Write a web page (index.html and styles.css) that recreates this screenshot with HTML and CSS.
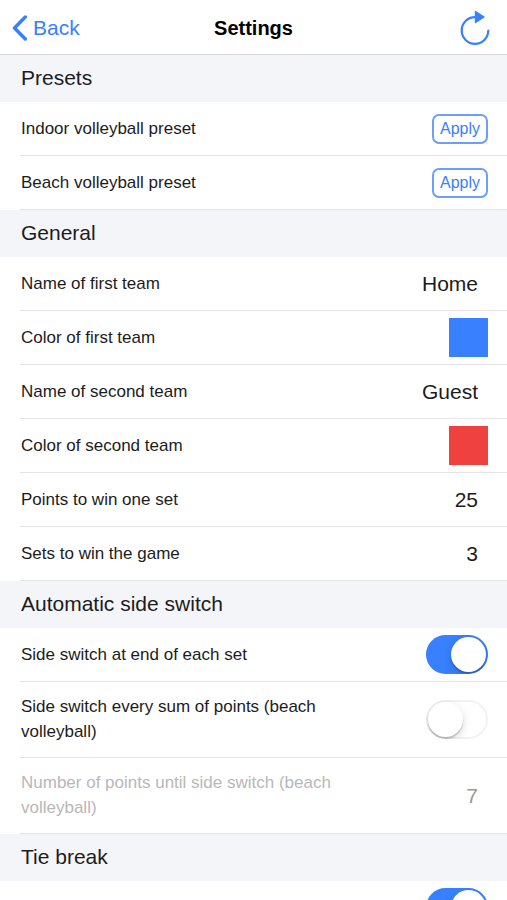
FILE: index.html
```html
<!DOCTYPE html>
<html lang="en">
<head>
<meta charset="utf-8">
<meta name="viewport" content="width=device-width, initial-scale=1">
<title>Settings</title>
<link rel="stylesheet" href="styles.css">
</head>
<body>
<header class="toolbar">
  <a class="back" href="#">
    <svg class="back-icon" viewBox="0 0 16 26" aria-hidden="true"><path d="M13.300 2 2.500 13l10.800 11"/></svg>
    <span>Back</span>
  </a>
  <h1 class="title">Settings</h1>
  <button class="reset" type="button" aria-label="Reset">
    <svg class="reset-icon" viewBox="0 0 32 36" aria-hidden="true">
      <path class="arc" d="M29.300 20.500A13.300 13.300 0 1 1 16 7.200h2"/>
      <path class="head" d="M16.500 1.500v11l8.500-5.500z"/>
    </svg>
  </button>
</header>
<main>
  <section>
    <h2 class="section-title">Presets</h2>
    <div class="row"><span class="label" id="indoor">Indoor volleyball preset</span><button class="apply" type="button" aria-describedby="indoor">Apply</button></div>
    <div class="row"><span class="label" id="beach">Beach volleyball preset</span><button class="apply" type="button" aria-describedby="beach">Apply</button></div>
  </section>
  <section>
    <h2 class="section-title">General</h2>
    <div class="row"><label class="label" for="name1">Name of first team</label><input class="value" id="name1" type="text" value="Home"></div>
    <div class="row"><label class="label" for="color1">Color of first team</label><input class="swatch" id="color1" type="color" value="#3880ff"></div>
    <div class="row"><label class="label" for="name2">Name of second team</label><input class="value" id="name2" type="text" value="Guest"></div>
    <div class="row"><label class="label" for="color2">Color of second team</label><input class="swatch" id="color2" type="color" value="#f04141"></div>
    <div class="row"><label class="label" for="points">Points to win one set</label><input class="value" id="points" type="text" inputmode="numeric" value="25"></div>
    <div class="row"><label class="label" for="sets">Sets to win the game</label><input class="value" id="sets" type="text" inputmode="numeric" value="3"></div>
  </section>
  <section>
    <h2 class="section-title">Automatic side switch</h2>
    <div class="row"><label class="label" for="switch-set">Side switch at end of each set</label><input class="toggle" id="switch-set" type="checkbox" role="switch" checked></div>
    <div class="row"><label class="label" for="switch-sum">Side switch every sum of points (beach volleyball)</label><input class="toggle" id="switch-sum" type="checkbox" role="switch"></div>
    <div class="row disabled"><label class="label" for="switch-points">Number of points until side switch (beach volleyball)</label><input class="value" id="switch-points" type="text" value="7" disabled></div>
  </section>
  <section>
    <h2 class="section-title" id="tie-title">Tie break</h2>
    <div class="row row-end"><input class="toggle" type="checkbox" role="switch" aria-labelledby="tie-title" checked></div>
  </section>
</main>
</body>
</html>
```
FILE: styles.css
```css
:root {
  --blue: #3880ff;
  --line: #e4e4e6;
}

* { box-sizing: border-box; }

html,
body { height: 100%; }

body {
  margin: 0;
  display: flex;
  flex-direction: column;
  overflow: hidden;
  background: #fff;
  color: #1c1c1c;
  font-family: "Liberation Sans", Arial, sans-serif;
}

input,
button { font-family: inherit; margin: 0; }

.toolbar {
  flex: none;
  display: grid;
  grid-template-columns: 1fr auto 1fr;
  align-items: center;
  height: 55px;
  padding: 2px 12px 0;
  border-bottom: 1px solid #d8d8da;
}

.back {
  display: flex;
  align-items: center;
  gap: 5px;
  color: var(--blue);
  font-size: 21px;
  text-decoration: none;
}

.back-icon {
  width: 16px;
  height: 26px;
  fill: none;
  stroke: var(--blue);
  stroke-width: 3.4;
  stroke-linecap: round;
  stroke-linejoin: round;
}

.title {
  margin: 0;
  color: #000;
  font-size: 20px;
  font-weight: 700;
}

.reset {
  justify-self: end;
  padding: 0 4px 0 0;
  border: 0;
  background: none;
}

.reset-icon {
  display: block;
  width: 32px;
  height: 36px;
}

.arc {
  fill: none;
  stroke: var(--blue);
  stroke-width: 2.2;
  stroke-linecap: round;
}

.head {
  fill: var(--blue);
  stroke: var(--blue);
  stroke-width: 1.4;
  stroke-linejoin: round;
}

main {
  flex: 1;
  min-height: 0;
  overflow: hidden;
}

.section-title {
  margin: 0;
  padding: 0 21px 1px;
  background: #f4f5f9;
  font-size: 21px;
  font-weight: 400;
  line-height: 46px;
}

.row {
  display: flex;
  align-items: center;
  justify-content: space-between;
  min-height: 54px;
  margin-left: 20px;
  padding: 0 19px 0 1px;
  border-bottom: 1px solid var(--line);
}

.row-end { justify-content: flex-end; }

.label {
  flex: 1;
  max-width: 367px;
  padding: 12px 0 13px;
  font-size: 17px;
  line-height: 25px;
}

.apply {
  width: 56px;
  height: 30px;
  padding: 0;
  border: 2px solid #6b9ffa;
  border-radius: 7px;
  background: #fff;
  color: var(--blue);
  font-size: 16px;
}

.value {
  width: 100px;
  padding: 0 10px 0 0;
  border: 0;
  background: none;
  color: inherit;
  font-size: 21px;
  text-align: right;
}

.swatch {
  appearance: none;
  width: 39px;
  height: 39px;
  padding: 0;
  border: 0;
  background: none;
}

.swatch::-webkit-color-swatch-wrapper { padding: 0; }

.swatch::-webkit-color-swatch { border: 0; }

.toggle {
  appearance: none;
  display: flex;
  align-items: center;
  width: 62px;
  height: 39px;
  padding: 0 2px;
  border-radius: 20px;
  background: #fff;
  box-shadow: inset 0 0 0 2px #f2f2f2;
  overflow: hidden;
}

.toggle::before {
  content: "";
  width: 35px;
  height: 35px;
  border-radius: 50%;
  background: #fff;
  box-shadow: 0 3px 8px rgba(0, 0, 0, 0.16), 0 2px 1px rgba(0, 0, 0, 0.16);
}

.toggle:checked {
  justify-content: flex-end;
  background: var(--blue);
  box-shadow: none;
}

.disabled { color: #b8b8b8; }

.disabled .value { color: #999; }
```
